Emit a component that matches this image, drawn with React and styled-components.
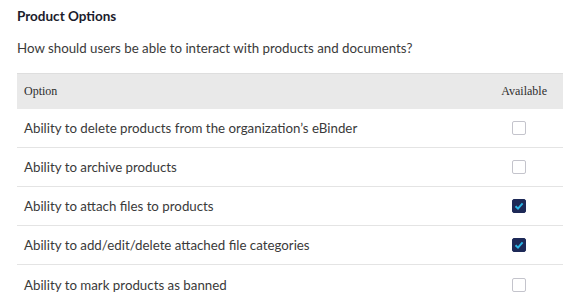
import * as React from "react";
import styled, { createGlobalStyle } from "styled-components";

const GlobalStyle = createGlobalStyle`
  body {
    margin: 0;
    background: #fff;
    font-family: Lato, "Open Sans", sans-serif;
    color: #3a3a3a;
  }
`;

const Page = styled.div`
  padding: 8px 17px 0 17px;
  width: 546px;
`;

const Title = styled.h2`
  margin: 0;
  font-size: 13.5px;
  line-height: 16px;
  font-weight: 700;
  color: #1c1c2c;
`;

const Intro = styled.p`
  margin: 16px 0 0;
  font-size: 13.3px;
  line-height: 16px;
  color: #3a3a3a;
`;

const Table = styled.div`
  margin-top: 17px;
  display: grid;
  grid-template-columns: 1fr 72px;
`;

const HeadCell = styled.div`
  height: 36px;
  box-sizing: border-box;
  display: flex;
  align-items: center;
  justify-content: ${(p) => (p.right ? "flex-end" : "flex-start")};
  padding: ${(p) => (p.right ? "0 16px 0 0" : "0 0 0 7px")};
  background: #e9e9e9;
  border-top: 1px solid #dedede;
  font-family: "Liberation Serif", serif;
  font-size: 12px;
  color: #2e2e2e;
`;

const Cell = styled.div`
  height: 39px;
  box-sizing: border-box;
  display: flex;
  align-items: center;
  justify-content: ${(p) => (p.check ? "flex-end" : "flex-start")};
  padding: ${(p) => (p.check ? "0 37px 0 0" : "0 0 0 7px")};
  border-bottom: ${(p) => (p.last ? "none" : "1px solid #e4e4e4")};
  font-size: 13.3px;
  color: #3a3a3a;
`;

const Box = styled.span`
  width: 14px;
  height: 14px;
  box-sizing: border-box;
  border-radius: 2px;
  border: 1px solid ${(p) => (p.checked ? "#1d2957" : "#c4c4cc")};
  background: ${(p) => (p.checked ? "#1d2957" : "#fff")};
  display: flex;
  align-items: center;
  justify-content: center;
`;

const options = [
  { label: "Ability to delete products from the organization\u2019s eBinder", on: false },
  { label: "Ability to archive products", on: false },
  { label: "Ability to attach files to products", on: true },
  { label: "Ability to add/edit/delete attached file categories", on: true },
  { label: "Ability to mark products as banned", on: false },
];

const Check = ({ checked }) => (
  <Box checked={checked}>
    {checked && (
      <svg width="10" height="10" viewBox="0 0 10 10">
        <path d="M1.5 5.2 L4 7.6 L8.6 2.4" fill="none" stroke="#2cb6e6" strokeWidth="2" />
      </svg>
    )}
  </Box>
);

export default function App() {
  return (
    <>
      <GlobalStyle />
      <Page>
        <Title>Product Options</Title>
        <Intro>How should users be able to interact with products and documents?</Intro>
        <Table>
          <HeadCell>Option</HeadCell>
          <HeadCell right>Available</HeadCell>
          {options.map((o, i) => (
            <React.Fragment key={o.label}>
              <Cell last={i === options.length - 1}>{o.label}</Cell>
              <Cell check last={i === options.length - 1}>
                <Check checked={o.on} />
              </Cell>
            </React.Fragment>
          ))}
        </Table>
      </Page>
    </>
  );
}
